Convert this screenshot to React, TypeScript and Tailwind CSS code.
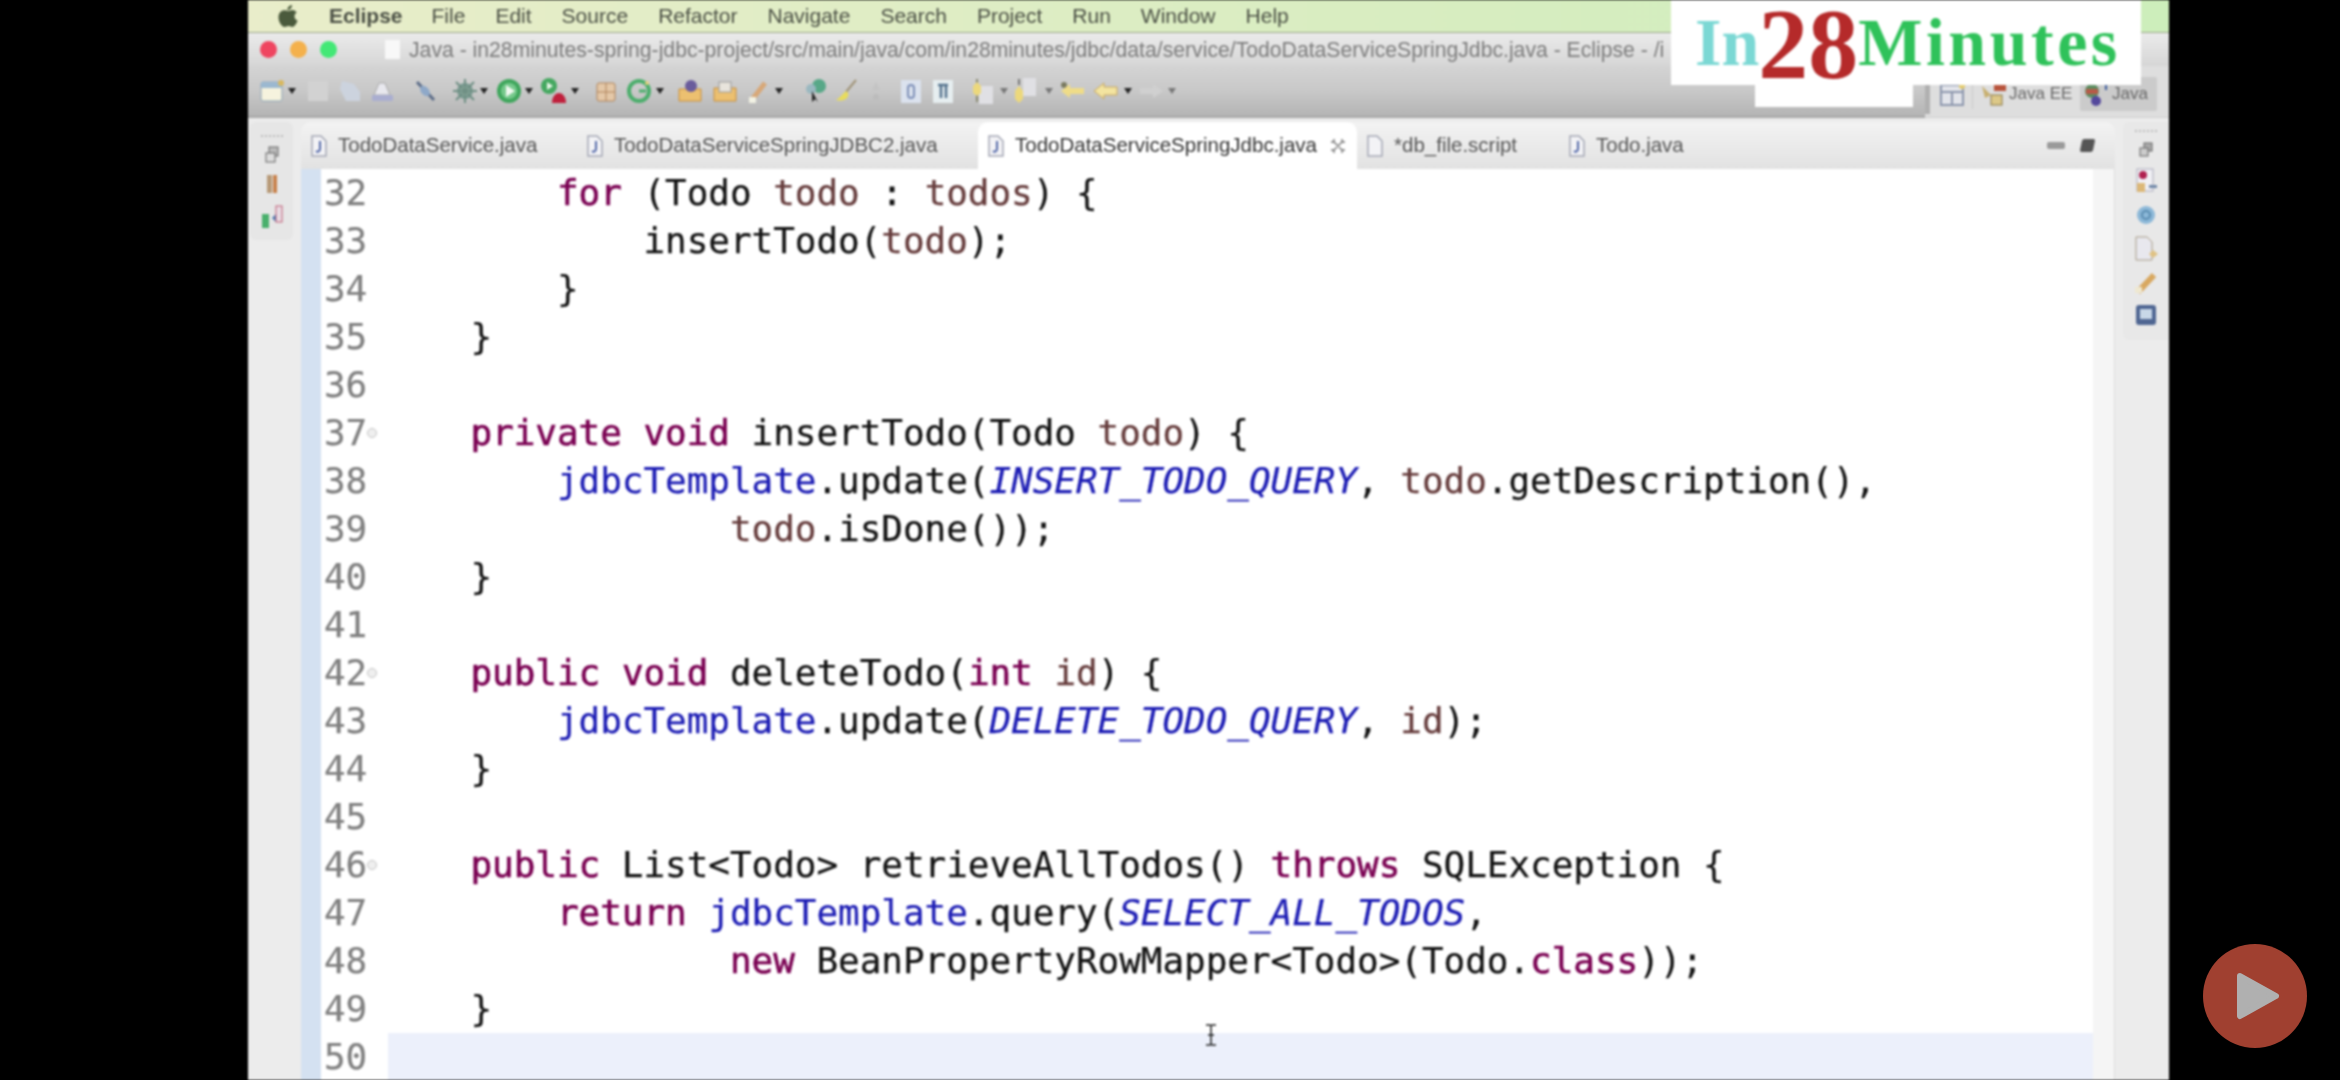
import type { ReactNode } from "react";

type Tok = [string, "k" | "v" | "f" | "c" | "p"];

const TOK_CLASS = {
  k: "text-[#7a0052] [-webkit-text-stroke:0.6px_#7a0052]",
  v: "text-[#653b3b]",
  f: "text-[#1c1cb4]",
  c: "text-[#1c1cb4] italic",
  p: "text-[#111]",
};

const LINES: { n: number; fold?: boolean; toks: Tok[] }[] = [
  { n: 32, toks: [["        ", "p"], ["for", "k"], [" (Todo ", "p"], ["todo", "v"], [" : ", "p"], ["todos", "v"], [") {", "p"]] },
  { n: 33, toks: [["            insertTodo(", "p"], ["todo", "v"], [");", "p"]] },
  { n: 34, toks: [["        }", "p"]] },
  { n: 35, toks: [["    }", "p"]] },
  { n: 36, toks: [] },
  { n: 37, fold: true, toks: [["    ", "p"], ["private", "k"], [" ", "p"], ["void", "k"], [" insertTodo(Todo ", "p"], ["todo", "v"], [") {", "p"]] },
  { n: 38, toks: [["        ", "p"], ["jdbcTemplate", "f"], [".update(", "p"], ["INSERT_TODO_QUERY", "c"], [", ", "p"], ["todo", "v"], [".getDescription(),", "p"]] },
  { n: 39, toks: [["                ", "p"], ["todo", "v"], [".isDone());", "p"]] },
  { n: 40, toks: [["    }", "p"]] },
  { n: 41, toks: [] },
  { n: 42, fold: true, toks: [["    ", "p"], ["public", "k"], [" ", "p"], ["void", "k"], [" deleteTodo(", "p"], ["int", "k"], [" ", "p"], ["id", "v"], [") {", "p"]] },
  { n: 43, toks: [["        ", "p"], ["jdbcTemplate", "f"], [".update(", "p"], ["DELETE_TODO_QUERY", "c"], [", ", "p"], ["id", "v"], [");", "p"]] },
  { n: 44, toks: [["    }", "p"]] },
  { n: 45, toks: [] },
  { n: 46, fold: true, toks: [["    ", "p"], ["public", "k"], [" List<Todo> retrieveAllTodos() ", "p"], ["throws", "k"], [" SQLException {", "p"]] },
  { n: 47, toks: [["        ", "p"], ["return", "k"], [" ", "p"], ["jdbcTemplate", "f"], [".query(", "p"], ["SELECT_ALL_TODOS", "c"], [",", "p"]] },
  { n: 48, toks: [["                ", "p"], ["new", "k"], [" BeanPropertyRowMapper<Todo>(Todo.", "p"], ["class", "k"], ["));", "p"]] },
  { n: 49, toks: [["    }", "p"]] },
  { n: 50, toks: [] },
];

const MENU = ["File", "Edit", "Source", "Refactor", "Navigate", "Search", "Project", "Run", "Window", "Help"];

function Ic({ className, children }: { className?: string; children: ReactNode }) {
  return (
    <svg width="28" height="28" viewBox="0 0 28 28" className={`shrink-0 ${className ?? ""}`}>
      {children}
    </svg>
  );
}

function Drop({ className, light }: { className?: string; light?: boolean }) {
  return (
    <svg width="10" height="8" viewBox="0 0 10 8" className={`shrink-0 ${className ?? ""}`}>
      <path d="M1 1h8L5 7z" fill={light ? "#777" : "#222"} />
    </svg>
  );
}

function FileIcon({ tint }: { tint?: boolean }) {
  return (
    <svg width="18" height="22" viewBox="0 0 18 22" className="shrink-0">
      <path d="M2 1h9l5 5v15H2z" fill="#f3f3f6" stroke="#a5a8b5" strokeWidth="1.5" />
      {tint && <path d="M10 6v8c0 3-3 3-4 2" fill="none" stroke="#5468a8" strokeWidth="2" />}
    </svg>
  );
}

function Toolbar() {
  return (
    <div className="flex-1 flex items-center pl-[10px] bg-gradient-to-b from-[#d4d4d4] via-[#c8c8c8] to-[#b4b4b4] border-b-2 border-[#a8a8a8]">
      <Ic><rect x="3" y="5" width="21" height="19" rx="2" fill="#f6f3de" stroke="#8ea5b8" /><rect x="3" y="5" width="21" height="6" fill="#9bb8d0" /><circle cx="23" cy="6" r="3" fill="#d8b860" /></Ic>
      <Drop className="ml-[1px]" />
      <Ic className="ml-[7px]"><rect x="4" y="4" width="20" height="20" fill="#d2d2d2" /></Ic>
      <Ic className="ml-[4px]"><path d="M6 4l12 3 6 8v9H10L4 12z" fill="#ccd3de" /></Ic>
      <Ic className="ml-[4px]"><path d="M11 6h6l5 12H6z" fill="#e8e8ee" stroke="#aaa" /><rect x="4" y="18" width="21" height="6" rx="1" fill="#aaaed0" /></Ic>
      <Ic className="ml-[15px]"><path d="M6 5l17 18" stroke="#5c6c88" strokeWidth="3" /><ellipse cx="14" cy="14" rx="4" ry="6" transform="rotate(-40 14 14)" fill="#8ea8c8" /></Ic>
      <Ic className="ml-[12px]"><circle cx="14" cy="14" r="8" fill="#7a9a90" /><circle cx="14" cy="14" r="4" fill="#c2dcc8" /><path d="M14 2v24M2 14h24M5 5l18 18M23 5L5 23" stroke="#6f8f84" strokeWidth="2" /></Ic>
      <Drop />
      <Ic className="ml-[6px]"><circle cx="14" cy="14" r="12" fill="#3fa65c" /><circle cx="14" cy="14" r="8" fill="#76c98c" /><path d="M11 8l9 6-9 6z" fill="#f0f8f0" /></Ic>
      <Drop className="ml-[1px]" />
      <Ic className="ml-[5px]"><circle cx="10" cy="9" r="8" fill="#45a860" /><path d="M8 5l6 4-6 4z" fill="#e8f6e8" /><path d="M13 26c0-7 4-10 7-10s7 3 7 10z" fill="#c0203c" /></Ic>
      <Drop className="ml-[3px]" />
      <Ic className="ml-[12px]"><rect x="5" y="6" width="18" height="18" rx="2" fill="#e4c8a8" stroke="#b0845c" /><path d="M14 6v18M5 15h18" stroke="#b0845c" /></Ic>
      <Ic className="ml-[5px]"><circle cx="14" cy="14" r="10" fill="none" stroke="#4cae6c" strokeWidth="4" /><path d="M14 14h7" stroke="#4cae6c" strokeWidth="3" /><circle cx="22" cy="6" r="2" fill="#e8d080" /></Ic>
      <Drop className="ml-[2px]" />
      <Ic className="ml-[11px]"><path d="M3 12h22v12H3z" fill="#ecc070" stroke="#c89040" /><circle cx="15" cy="9" r="6" fill="#6a5c9c" /></Ic>
      <Ic className="ml-[7px]"><path d="M3 11h22v13H3z" fill="#ecc070" stroke="#c89040" /><rect x="8" y="5" width="12" height="10" fill="#e8e4dc" stroke="#999" /></Ic>
      <Ic className="ml-[7px]"><path d="M5 24l14-18" stroke="#d8a878" strokeWidth="5" /><rect x="3" y="20" width="7" height="6" fill="#f2f2e4" /></Ic>
      <Drop />
      <Ic className="ml-[18px]"><circle cx="17" cy="9" r="7" fill="#58a888" /><circle cx="9" cy="12" r="5" fill="#9ab8c0" /><path d="M10 14v11l3-3 3 3z" fill="#222" /></Ic>
      <Ic className="ml-[2px]"><path d="M24 3L14 15" stroke="#a09478" strokeWidth="2" /><path d="M14 14c3 2 3 4 1 7-3 3-8 3-11 2 4-2 6-6 10-9z" fill="#e8dc5c" /></Ic>
      <Ic className="ml-[2px]"><path d="M14 5l4 8h-8z" fill="#c4c4c4" /><circle cx="14" cy="20" r="3" fill="#bcbcbc" /></Ic>
      <Ic className="ml-[7px]"><rect x="4" y="3" width="20" height="23" fill="#dbe2ee" /><rect x="11" y="8" width="6" height="13" rx="3" fill="none" stroke="#7e90b8" strokeWidth="2" /></Ic>
      <Ic className="ml-[4px]"><rect x="4" y="3" width="20" height="23" fill="#e6eef0" /><path d="M9 8h10M12 8v13M17 8v13" stroke="#56748e" strokeWidth="2.5" /></Ic>
      <Ic className="ml-[10px]"><rect x="12" y="9" width="14" height="18" fill="#e0e0e4" /><path d="M10 2v7M10 17v8" stroke="#8a8a70" strokeWidth="2" /><path d="M6 9l4-4 4 4v7l-4 3-4-3z" fill="#ecd87c" /></Ic>
      <Drop className="ml-[4px]" light />
      <Ic className="ml-[1px]"><rect x="13" y="1" width="13" height="18" fill="#e0e0e4" /><path d="M9 2v6" stroke="#777" strokeWidth="2" /><path d="M5 14l4-5 4 5v8l-4 4-4-4z" fill="#ecd87c" /></Ic>
      <Drop className="ml-[6px]" light />
      <Ic className="ml-[5px]"><circle cx="5" cy="8" r="3" fill="#7a7a60" /><path d="M2 14l9-7v4h14v6H11v4z" fill="#efdc88" /></Ic>
      <Ic className="ml-[5px]"><path d="M2 14l10-8v4h13v8H12v4z" fill="#f3e4a0" stroke="#c8a860" /></Ic>
      <Drop className="ml-[3px]" />
      <Ic className="ml-[4px]"><path d="M26 14l-10-7v4H3v6h13v4z" fill="#d0d0d0" /></Ic>
      <Drop className="ml-[2px]" light />
    </div>
  );
}

function Perspectives() {
  return (
    <div className="w-[244px] flex items-center pt-[4px] bg-[#dedede] border-b border-[#cfcfcf] text-[17px] text-[#666] font-['Liberation_Sans',sans-serif]">
      <div className="w-[5px] h-[40px] bg-[#b0b0b0] shrink-0" />
      <Ic className="ml-[8px]"><rect x="3" y="5" width="22" height="20" fill="#e2e4ea" stroke="#8c96ac" strokeWidth="2" /><path d="M3 12h22M14 12v13" stroke="#8c96ac" strokeWidth="2" /><circle cx="24" cy="6" r="3" fill="#e4cc70" /></Ic>
      <div className="w-px h-[30px] bg-[#cacaca] ml-[6px] mr-[7px]" />
      <Ic><path d="M2 6l9 9-6 3z" fill="#c8b070" /><rect x="14" y="4" width="12" height="7" fill="#b8543c" /><rect x="11" y="15" width="11" height="10" fill="#dcc888" stroke="#8c7a48" /></Ic>
      <span className="ml-[1px] whitespace-nowrap">Java EE</span>
      <div className="ml-auto mr-[12px] h-[34px] w-[77px] rounded-[2px] bg-[#cbcbcb] flex items-center">
        <Ic className="ml-[2px]"><circle cx="10" cy="11" r="7" fill="#5c8c60" /><rect x="4" y="9" width="12" height="5" fill="#b85a48" /><circle cx="14" cy="21" r="5" fill="#54489c" /><path d="M24 3v7" stroke="#3c5c9c" strokeWidth="2" /></Ic>
        <span className="ml-[2px]">Java</span>
      </div>
    </div>
  );
}

function Tab({ name, className, tint, active }: { name: string; className: string; tint?: boolean; active?: boolean }) {
  return (
    <div
      className={`h-full flex items-center gap-[10px] pl-[9px] shrink-0 whitespace-nowrap text-[20.5px] ${className} ${
        active ? "bg-white rounded-t-[10px] text-[#333]" : "text-[#555]"
      }`}
    >
      <FileIcon tint={tint} />
      <span>{name}</span>
      {active && (
        <svg width="16" height="16" viewBox="0 0 16 16" className="ml-[3px]">
          <path d="M3 3l10 10M13 3L3 13M4 1v3H1M12 1v3h3M4 15v-3H1M12 15v-3h3" stroke="#777" strokeWidth="1.4" fill="none" />
        </svg>
      )}
    </div>
  );
}

function Editor() {
  return (
    <div className="flex-1 flex min-h-0 bg-white">
      <div className="w-[20px] bg-[#d4e1f1] shrink-0" />
      <div className="flex-1 flex flex-col font-['DejaVu_Sans_Mono',monospace] text-[36px] leading-[48px] tracking-[-0.05px] [-webkit-text-stroke:0.25px]">
        {LINES.map((l) => (
          <div key={l.n} className="h-[48px] flex">
            <div className="w-[43px] ml-[3px] text-[#808080] shrink-0">{l.n}</div>
            <div className="w-[17px] shrink-0 flex items-center">
              {l.fold && <div className="w-[10px] h-[10px] rounded-full border border-[#c4c4c4] bg-[#efefef]" />}
            </div>
            <div className="flex-1 whitespace-pre">
              {l.n === 50 && <div className="ml-[4px] h-full bg-[#ecf0fb]" />}
              {l.toks.map((t, i) => (
                <span key={i} className={TOK_CLASS[t[1]]}>{t[0]}</span>
              ))}
            </div>
          </div>
        ))}
      </div>
      <div className="w-[22px] bg-[#f5f5f5] shrink-0 border-r border-[#dcdcdc]" />
    </div>
  );
}

function Logo() {
  return (
    <div className="absolute right-[28px] top-0 w-[470px] font-['Liberation_Serif',serif] font-bold">
      <div className="h-[85px] bg-white flex items-start pl-[24px]">
        <span className="text-[68px] leading-none mt-[8px] text-[#7bd8d4]">In</span>
        <span className="text-[100px] leading-none -mt-[6px] text-[#b52a2a] -ml-[1px]">28</span>
        <span className="text-[68px] leading-none mt-[8px] text-[#2fc25a] tracking-[3.5px]">Minutes</span>
      </div>
      <div className="ml-[84px] w-[158px] h-[22px] bg-white" />
    </div>
  );
}

export default function App() {
  return (
    <div className="flex h-screen w-full overflow-hidden bg-black relative">
      <div className="w-[248px] shrink-0" />
      <div className="w-[1921px] shrink-0 relative flex flex-col blur-[0.8px] overflow-hidden font-['Liberation_Sans',sans-serif] bg-[#ececec]">
        {/* mac menu bar */}
        <div className="h-[33px] shrink-0 flex items-center bg-gradient-to-r from-[#e9edca] to-[#cdeebb] border-b border-[#9aa58a] text-[21px] text-[#4a4f44]">
          <svg width="20" height="24" viewBox="0 0 20 24" className="ml-[30px] shrink-0">
            <path d="M14 1c.3 2.500-2 5-4.500 5C9.200 3.500 11.600 1.200 14 1zM10 7c1.500 0 2.500-1 4.500-1 1.700 0 3.300 1 4.200 2.500-3.300 2-2.800 6.700.9 8.100-1 2.700-3 6.400-5.100 6.400-1.500 0-2-1-3.900-1s-2.500 1-4 1C3.500 23 .5 17.500.5 13.500.5 9.200 3.200 6.300 6 6.300c1.700 0 3 .7 4 .7z" fill="#4a5a3c" />
          </svg>
          <span className="ml-[31px] font-bold mr-[29px]">Eclipse</span>
          <div className="flex gap-[30px]">
            {MENU.map((m) => (
              <span key={m}>{m}</span>
            ))}
          </div>
        </div>

        {/* window title */}
        <div className="h-[33px] shrink-0 flex items-center bg-gradient-to-b from-[#ebebeb] to-[#d6d6d6] whitespace-nowrap overflow-hidden">
          <div className="ml-[12px] w-[17px] h-[17px] rounded-full bg-[#ef4560] shrink-0" />
          <div className="ml-[13px] w-[17px] h-[17px] rounded-full bg-[#f4b14c] shrink-0" />
          <div className="ml-[13px] w-[17px] h-[17px] rounded-full bg-[#43e876] shrink-0" />
          <div className="ml-[48px] w-[15px] h-[19px] bg-[#f8f8f8] shrink-0" />
          <span className="ml-[9px] text-[21.2px] text-[#7c7c7c]">
            Java - in28minutes-spring-jdbc-project/src/main/java/com/in28minutes/jdbc/data/service/TodoDataServiceSpringJdbc.java - Eclipse - /i
          </span>
        </div>

        {/* toolbar */}
        <div className="h-[52px] shrink-0 flex">
          <Toolbar />
          <Perspectives />
        </div>

        {/* workbench */}
        <div className="flex-1 min-h-0 flex pt-[4px] bg-[#ececec]">
          <div className="w-[53px] shrink-0">
            <div className="ml-[2px] mr-[8px] h-[118px] rounded-[6px] bg-[#e6e6e6] flex flex-col items-center pt-[13px] gap-[9px]">
              <div className="w-[22px] border-t-2 border-dotted border-[#bbb]" />
              <svg width="16" height="18" viewBox="0 0 16 18"><rect x="5" y="1" width="9" height="9" fill="#bbb" stroke="#666" /><rect x="2" y="7" width="9" height="9" fill="#ddd" stroke="#666" /></svg>
              <svg width="16" height="22" viewBox="0 0 16 22"><rect x="3" y="2" width="5" height="18" fill="#b79a78" /><rect x="9" y="2" width="4" height="18" fill="#c8824c" /></svg>
              <svg width="24" height="26" viewBox="0 0 24 26"><rect x="2" y="10" width="7" height="14" fill="#49b06c" /><path d="M12 14l4-4v8z" fill="#4a78b0" /><rect x="16" y="2" width="6" height="16" fill="#e8dce4" stroke="#c06078" /></svg>
            </div>
          </div>

          <div className="w-[1814px] shrink-0 flex flex-col">
            <div className="h-[47px] shrink-0 flex items-center rounded-t-[10px] bg-gradient-to-b from-[#f3f3f3] to-[#e2e2e2]">
              <Tab name="TodoDataService.java" className="w-[276px]" tint />
              <Tab name="TodoDataServiceSpringJDBC2.java" className="w-[401px]" tint />
              <Tab name="TodoDataServiceSpringJdbc.java" className="w-[379px]" tint active />
              <Tab name="*db_file.script" className="w-[202px]" />
              <Tab name="Todo.java" className="w-[200px]" tint />
              <div className="ml-auto mr-[21px] flex items-center gap-[16px]">
                <div className="w-[18px] h-[7px] rounded-[2px] bg-[#9a9a9a]" />
                <div className="w-[13px] h-[13px] bg-[#555] skew-x-[-12deg] rounded-[2px]" />
              </div>
            </div>
            <Editor />
          </div>

          <div className="flex-1">
            <div className="ml-[8px] h-[218px] rounded-l-[6px] bg-[#e8e8e8] flex flex-col items-center pt-[8px] gap-[10px]">
              <div className="w-[22px] border-t-2 border-dotted border-[#bbb]" />
              <svg width="14" height="16" viewBox="0 0 14 16"><rect x="5" y="1" width="8" height="8" fill="#aaa" stroke="#666" /><rect x="1" y="6" width="8" height="8" fill="#ccc" stroke="#666" /></svg>
              <svg width="22" height="26" viewBox="0 0 22 26"><rect x="2" y="1" width="16" height="22" fill="#f0f0f4" stroke="#aab" /><circle cx="8" cy="7" r="4" fill="#b02050" /><rect x="2" y="15" width="8" height="9" fill="#dcb878" /><rect x="14" y="17" width="8" height="3" fill="#7088a8" /></svg>
              <svg width="22" height="22" viewBox="0 0 22 22"><circle cx="11" cy="11" r="9" fill="#8cb8d8" /><circle cx="11" cy="11" r="4" fill="none" stroke="#5a8cb0" strokeWidth="2" /></svg>
              <svg width="24" height="26" viewBox="0 0 24 26"><path d="M2 1h11l5 5v18H2z" fill="#e8e8ee" stroke="#a89c88" /><path d="M15 18l4-4 5 4-5 4z" fill="#dfc284" /></svg>
              <svg width="24" height="22" viewBox="0 0 24 22"><path d="M4 20L20 3" stroke="#d8a860" strokeWidth="6" /><rect x="1" y="15" width="7" height="6" fill="#efe8d0" /></svg>
              <svg width="22" height="22" viewBox="0 0 22 22"><rect x="1" y="1" width="20" height="20" rx="3" fill="#4f6692" /><rect x="5" y="5" width="12" height="10" fill="#c8d8e8" /></svg>
            </div>
          </div>
        </div>

        <Logo />

        {/* mouse cursor */}
        <svg width="12" height="22" viewBox="0 0 12 22" className="absolute left-[957px] top-[1024px]">
          <path d="M1 1h4l1 1 1-1h4M6 2v18M1 21h4l1-1 1 1h4M3 11h6" stroke="#222" strokeWidth="1.5" fill="none" />
        </svg>
      </div>

      {/* video play button */}
      <div className="absolute left-[2203px] top-[944px] w-[104px] h-[104px] rounded-full bg-[#a04030] flex items-center justify-center">
        <svg width="46" height="50" viewBox="0 0 46 50" className="ml-[6px]">
          <path d="M5 5l36 20L5 45z" fill="#b0b0b0" stroke="#b0b0b0" strokeWidth="6" strokeLinejoin="round" />
        </svg>
      </div>
    </div>
  );
}
